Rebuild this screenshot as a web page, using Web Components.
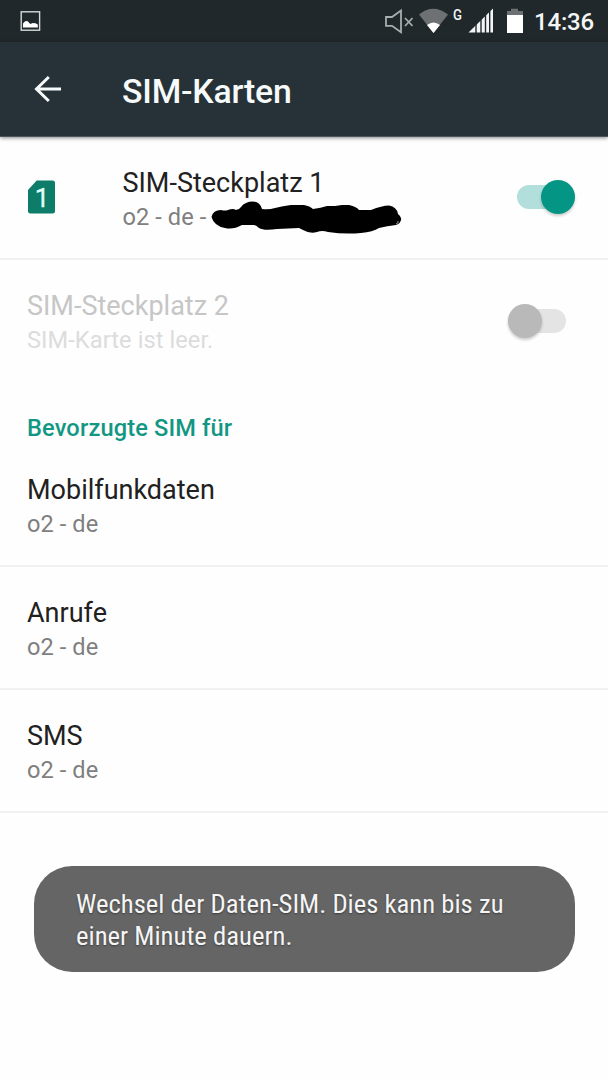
<!DOCTYPE html>
<html lang="de"><head><meta charset="utf-8"><title>SIM-Karten</title>
<style>html,body{margin:0;background:#fefefe}body{font-family:Roboto,"Noto Sans",sans-serif;width:608px;height:1080px;overflow:hidden}</style></head>
<body><sim-settings></sim-settings>
<script>
const define=(name,html)=>customElements.define(name,class extends HTMLElement{
  constructor(){super();const t=document.createElement('template');t.innerHTML=html;this.attachShadow({mode:'open'}).append(t.content.cloneNode(true));}
});
define('status-bar',`<style>
:host{display:flex;height:42px;background:#21282b;color:#f4f6f6;align-items:center;box-sizing:border-box}
svg{display:block;flex:none}
.time{font-size:24px;font-weight:500;line-height:42px;margin-left:11px;width:60px;white-space:nowrap;padding-top:2px;letter-spacing:-.2px}
.g{font-size:15.5px;font-weight:500;line-height:16px;align-self:flex-start;margin:7px 0 0 5px;width:9px;transform:scaleX(.85);transform-origin:0 0}
.space{flex:1}
</style>
<svg width="41" height="42"><rect x="21.2" y="11.8" width="18.4" height="18.4" fill="none" stroke="#d5d9da" stroke-width="1.4"/><path d="M23 27.500v-4q1-2 3-2.500 2-.5 3 1.700l1.500 1.300 2-1 1.500.3 1-.3 2.800 1.500v3z" fill="#fff"/></svg>
<div class="space"></div>
<svg width="29" height="42" viewBox="384 0 29 42" fill="none" stroke="#a9adae"><path d="M386 17h6l9-6.400v21.600l-9-6.400h-6z" stroke-width="1.8"/><path d="m405 18 7.500 8m0-8-7.500 8" stroke-width="1.7"/></svg>
<svg width="30" height="42" viewBox="418 0 30 42" style="margin-left:5px"><path d="M419 14.500Q433 3 448 14.500L433.500 33z" fill="#6d7173"/><path d="M427 25Q433.500 20 440 25L433.500 33z" fill="#fff"/></svg>
<div class="g">G</div>
<svg width="26" height="42" viewBox="468 0 26 42" style="margin-left:6px"><path d="M468.500 32.500L493 8.500V32.500z" fill="#f4f6f6"/><path d="M476 8v25M481 8v25M485.500 8v25M489.700 8v25" stroke="#21282b" stroke-width="1.4"/></svg>
<svg width="17" height="42" viewBox="506 0 17 42" style="margin-left:12.500px"><path d="M507 15v-4h4V8.700h7V11h5v4z" fill="#6d7173"/><path d="M507 15h16v18h-16z" fill="#fff"/></svg>
<div class="time"><slot></slot></div><i style="width:14px"></i>`);
define('app-bar',`<style>
:host{display:flex;height:95px;background:#263238;color:#f7fafa;align-items:center;border-bottom:1px solid #4c565a;box-shadow:0 1px 4px #0007;box-sizing:border-box;position:relative}
svg{display:block;margin-left:31.500px;flex:none}h1{margin:5px 0 0 60.500px;font-size:33.800px;font-weight:500;line-height:40px;white-space:nowrap;letter-spacing:-.2px}
</style><svg width="30" height="28" viewBox="32 76 30 28" fill="none" stroke="#f7fafa" stroke-width="3"><path d="M61 90H36M48.800 78 36.500 90 48.800 102"/></svg><h1><slot></slot></h1>`);
define('sim-icon',`<style>:host{display:block;width:28px;height:34px;margin-top:-2px}svg{display:block}</style>
<svg width="28" height="34"><path d="M9.700.500H25.500Q28 .500 28 3V31Q28 33.500 25.500 33.500H3.500Q1 33.500 1 31V10Z" fill="#0d7c68"/><text x="15" y="26.500" text-anchor="middle" font-family="Roboto" font-size="26" fill="#e0fff8" stroke="#e0fff8" stroke-width=".3">1</text></svg>`);
define('redaction-mark',`<style>:host{display:inline-block;width:192px;height:33px;vertical-align:top}svg{display:block}</style>
<svg width="192" height="33" viewBox="210 201 192 33"><path d="M211.500 217Q213 210 221 210Q225 211 228 210Q233 208 236 210Q240 209 241 207Q245 201.500 253 201.500Q260 202 262 209Q269 210 275 208Q283 206 291 205H304Q310 206 313 209Q321 208 327 206L335 206 342 205H349Q357 207 359 210H371Q382 205.500 389 205.500Q397 207 398 214Q402 217 401 220Q400 224 396 225Q387 226 379 228Q373 232 361 233Q345 234.500 328 232Q322 230 317 232Q310 234 303 230L299 228 277 229Q264 231 259 228Q256 225 254 225H242Q233 230 225 228Q214 226 211.500 217z" fill="#000"/><path d="M396 224q3-1 2-3" fill="none" stroke="#ddd" stroke-width=".7"/></svg>`);
define('toggle-switch',`<style>
:host{display:flex;width:58px;height:36px;align-items:center;margin-top:-2px;--track:#b2dfdb;--knob:#059585}
.track{display:flex;align-items:center;justify-content:flex-end;width:58px;height:24px;border-radius:12px;background:var(--track)}
.knob{width:34px;height:34px;border-radius:50%;background:var(--knob);box-shadow:0 2px 3px #0003;flex:none}
:host([off]){--track:#e4e4e4;--knob:#b9b9b9}:host([off]) .track{justify-content:flex-start}
</style><div class="track"><div class="knob"></div></div>`);
define('pref-row',`<style>
:host{display:flex;align-items:center;height:123px;box-sizing:border-box;border-bottom:2px solid #f1f1f1;padding:1px 33px 0 27px}
:host([plain]){border-color:transparent}
.lead{display:flex}.lead ::slotted(*){margin-right:67.500px}
.text{flex:1;min-width:0;display:flex;flex-direction:column;gap:3px}
.title{font-size:27px;line-height:34px;color:#212121;white-space:nowrap}
.sub{font-size:23.600px;line-height:28px;height:28px;color:#7f7f7f;white-space:nowrap;letter-spacing:.08px}
:host([disabled]) .title{color:#c6c6c6}:host([disabled]) .sub{color:#dcdcdc}
</style><div class="lead"><slot name="icon"></slot></div><div class="text"><div class="title"><slot name="title"></slot></div><div class="sub"><slot></slot></div></div><slot name="action"></slot>`);
define('section-header',`<style>:host{display:flex;height:60px;align-items:center;padding:0 27px;font-size:23.600px;font-weight:500;color:#119783;box-sizing:border-box;line-height:28px;letter-spacing:.15px}span{margin-top:28px;white-space:nowrap}</style><span><slot></slot></span>`);
define('toast-message',`<style>
:host{display:block;box-sizing:border-box;width:541px;height:106px;border-radius:38px;background:#656565;color:#f5f5f5;padding:22px 0 0 42.500px;font:26.700px/32px "Roboto Condensed",Roboto,sans-serif;font-stretch:75%;text-shadow:0 1px 2px #0006}
::slotted(span){display:block;width:max-content;white-space:nowrap}
</style><slot></slot>`);
define('sim-settings',`<style>
:host{display:flex;flex-direction:column;width:608px;height:1080px;background:#fefefe}
toast-message{margin:53px 0 0 33.500px}
redaction-mark{margin:-2px 0 0 4px}
</style>
<status-bar>14:36</status-bar><app-bar>SIM-Karten</app-bar>
<main>
<pref-row><sim-icon slot="icon"></sim-icon><span slot="title">SIM-Steckplatz 1</span>o2 - de -<redaction-mark></redaction-mark><toggle-switch slot="action"></toggle-switch></pref-row>
<pref-row plain disabled style="height:124px"><span slot="title">SIM-Steckplatz 2</span>SIM-Karte ist leer.<toggle-switch off slot="action" style="margin-right:9px"></toggle-switch></pref-row>
<section-header>Bevorzugte SIM für</section-header>
<pref-row><span slot="title">Mobilfunkdaten</span>o2 - de</pref-row>
<pref-row><span slot="title">Anrufe</span>o2 - de</pref-row>
<pref-row><span slot="title">SMS</span>o2 - de</pref-row>
</main>
<toast-message><span>Wechsel der Daten-SIM. Dies kann bis zu</span><span>einer Minute dauern.</span></toast-message>`);
</script></body></html>
